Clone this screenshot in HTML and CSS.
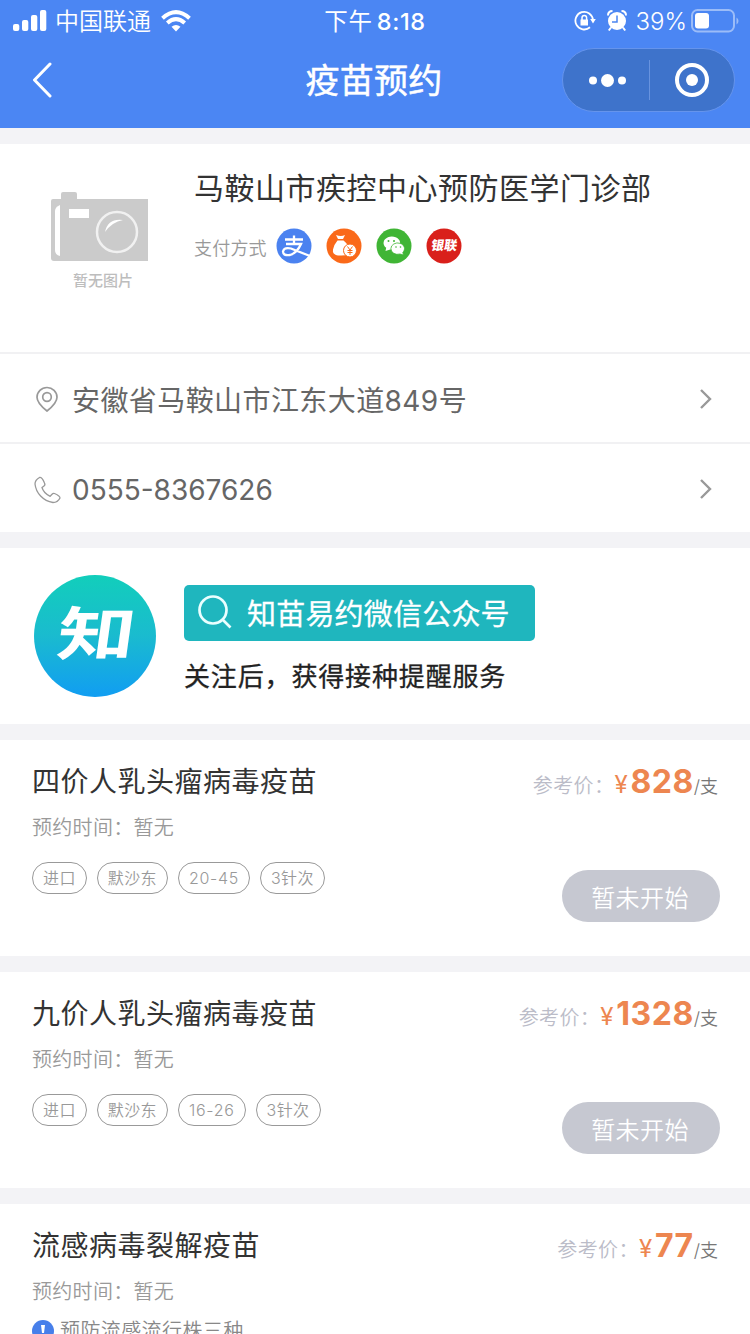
FILE: index.html
```html
<!DOCTYPE html>
<html lang="zh-CN">
<head>
<meta charset="utf-8">
<title>疫苗预约</title>
<link rel="stylesheet" href="styles.css">
</head>
<body>
<div class="screen">
  <header class="header">
    <div class="status">
      <div class="status-left">
        <svg class="signal" width="34" height="22" viewBox="0 0 34 22" fill="#fff"><rect x="0" y="14" width="6.3" height="7" rx="2"/><rect x="9" y="10" width="6.3" height="11" rx="2"/><rect x="18" y="5" width="6.3" height="16" rx="2"/><rect x="27" y="0" width="6.3" height="21" rx="2"/></svg>
        <span class="carrier">中国联通</span>
        <svg class="wifi" width="30" height="22" viewBox="0 0 30 22" fill="none" stroke="#fff" stroke-width="4"><path d="M1.500 8.200Q15-4 28.500 8.200"/><path d="M6.300 13Q15 5.300 23.700 13"/><path d="M15 21.500 10.500 16.800Q15 13.300 19.500 16.800Z" fill="#fff" stroke="none"/></svg>
      </div>
      <div class="clock">下午 <b>8:18</b></div>
      <div class="status-right">
        <svg width="22" height="22" viewBox="0 0 22 22"><path d="M16 17.300A8.800 8.800 0 1 1 19 10" fill="none" stroke="#fff" stroke-width="1.800"/><path d="M16.200 9h5.600L19 13.500zM6.500 9.500h7.500v6H6.500z" fill="#fff"/><path d="M8 10V7.700a2.300 2.300 0 0 1 4.600 0V10" fill="none" stroke="#fff" stroke-width="1.500"/></svg>
        <svg class="alarm" width="20" height="22" viewBox="0 0 20 22"><circle cx="10" cy="11" r="9" fill="#fff"/><path d="M1 5.500Q1 1 5.500 1M14.500 1Q19 1 19 5.500M4 17.500 1.800 20.500M16 17.500l2.200 3" fill="none" stroke="#fff" stroke-width="2"/><path d="M10 5.500V12H5" fill="none" stroke="#4b85f1" stroke-width="1.500"/></svg>
        <span class="percent">39%</span>
        <svg class="battery" width="48" height="24" viewBox="0 0 48 24"><rect x="1" y="1" width="42" height="21.500" rx="5.500" fill="none" stroke="#9bbcf8" stroke-width="2"/><rect x="4" y="4" width="14" height="15.500" rx="3" fill="#fff"/><path d="M45.500 8.500v7q2-1 2-3.500t-2-3.500" fill="#9bbcf8"/></svg>
      </div>
    </div>
    <div class="nav">
      <svg class="back" width="22" height="36" viewBox="0 0 22 36" fill="none" stroke="#fff" stroke-width="3" stroke-linecap="round" stroke-linejoin="round"><path d="M18 2 2.500 18 18 34"/></svg>
      <h1 class="nav-title">疫苗预约</h1>
      <div class="capsule">
        <svg class="capsule-icons" width="172" height="62" viewBox="0 0 172 62"><g fill="#fff"><circle cx="30" cy="31.500" r="4"/><circle cx="44.500" cy="31.500" r="6.500"/><circle cx="59" cy="31.500" r="4"/><circle cx="129" cy="31" r="6"/></g><path d="M86.500 11v40" stroke="#6893df" stroke-width="1"/><circle cx="129" cy="31" r="15" fill="none" stroke="#fff" stroke-width="4"/></svg>
      </div>
    </div>
  </header>

  <section class="card clinic">
    <div class="clinic-main">
      <div class="photo">
        <svg width="98" height="71" viewBox="0 0 98 71"><path d="M0 9q0-2 2-2h8V2q0-2 2-2h12q2 0 2 2v5h71v62H3q-3 0-3-3z" fill="#cbcbcb"/><path d="M4 19q0-4 5-6v51q-5-1-5-6z" fill="#fff"/><rect x="18" y="17" width="20" height="9" fill="#fff"/><circle cx="66" cy="40" r="20" fill="none" stroke="#f1f1f1" stroke-width="2.500"/><path d="M54 40Q57 26 72 28Q61 30 54 40" fill="#fff"/></svg>
        <span class="photo-text">暂无图片</span>
      </div>
      <div class="clinic-info">
        <h2 class="clinic-name">马鞍山市疾控中心预防医学门诊部</h2>
        <div class="payments">
          <span class="pay-label">支付方式</span>
          <svg class="pay" viewBox="0 0 36 36"><circle cx="18" cy="18" r="17.500" fill="#4b82f0"/><path d="M9 11.500h18M18 7.500v7.500M10 16h15Q21 25 14 27 7 28 7 23.500 8 19 15 20.500L34 28" fill="none" stroke="#fff" stroke-width="2.300"/></svg>
          <svg class="pay" viewBox="0 0 36 36"><circle cx="18" cy="18" r="17.500" fill="#fa6919"/><path d="M10 7q5 2 9 0l-2 4h-5zM11.500 12.500h6q6 5 6 10 0 5-8 5H12q-6-1-5-6 1-5 4.500-9" fill="#fff"/><circle cx="24" cy="22.500" r="6.500" fill="#fff" stroke="#fa6919" stroke-width="1"/><path d="m21.500 18.500 2.500 3.500 2.500-3.500M24 22v5M21.500 22.500h5M21.500 24.500h5" fill="none" stroke="#fa6919" stroke-width="1"/></svg>
          <svg class="pay" viewBox="0 0 36 36"><circle cx="18" cy="18" r="17.500" fill="#40b535"/><path d="m9.500 23 .7-3.200a8.300 6.500 0 1 1 4 1.600z" fill="#fff"/><path d="m27.500 27-3.500-1a6.800 5.700 0 1 1 2.800-1.600z" fill="#fff" stroke="#40b535" stroke-width=".8"/><g fill="#40b535"><circle cx="12.500" cy="13" r="1"/><circle cx="18" cy="13" r="1"/><circle cx="20" cy="19" r=".8"/><circle cx="24.500" cy="19" r=".8"/></g></svg>
          <svg class="pay" viewBox="0 0 36 36"><circle cx="18" cy="18" r="17.500" fill="#d9201b"/><text class="union" x="4.500" y="22.500" transform="translate(3.500 0) skewX(-9)">银联</text></svg>
        </div>
      </div>
    </div>
    <div class="contact">
      <svg class="contact-icon" width="28" height="28" viewBox="0 0 28 28" fill="none" stroke="#999" stroke-width="1.700"><path d="M13 25Q3 17 3 11.200A10 9.700 0 0 1 23 11.200Q23 17 13 25Z"/><circle cx="13" cy="11" r="4.300"/></svg>
      <span class="address">安徽省马鞍山市江东大道849号</span>
      <svg class="arrow" width="14" height="22" viewBox="0 0 14 22"><path d="m2 2 9 9-9 9"/></svg>
    </div>
    <div class="contact">
      <svg class="contact-icon" width="28" height="28" viewBox="0 0 28 28" fill="none" stroke="#999" stroke-width="1.300"><path d="M5.500 1.500Q1 4 1 8c1 9 8 17 18 18.500 3 0 5.500-1.500 7-4.500q0-2-5.500-4.500-1.500-.5-2.500.8l-1.800 2Q9.500 17 8 11.500l2-1.500q1.500-1 .5-3Q8 1 5.500 1.500Z"/></svg>
      <span class="phone">0555-8367626</span>
      <svg class="arrow" width="14" height="22" viewBox="0 0 14 22"><path d="m2 2 9 9-9 9"/></svg>
    </div>
  </section>

  <section class="card promo">
    <svg class="logo" width="122" height="122" viewBox="0 0 122 122"><defs><linearGradient id="sea" x1="0" y1="0" x2="0" y2="1"><stop offset="0" stop-color="#12cebb"/><stop offset=".5" stop-color="#1abbcf"/><stop offset="1" stop-color="#119df2"/></linearGradient></defs><circle cx="61" cy="61" r="61" fill="url(#sea)"/><text class="logo-text" transform="translate(21 80) skewX(-8) scale(1.34 1)">知</text></svg>
    <div class="promo-body">
      <div class="search">
        <svg width="34" height="34" viewBox="0 0 34 34" fill="none" stroke="#eaffff" stroke-width="2.700"><circle cx="15" cy="15" r="13.500"/><path d="m24.500 24.500 8 8"/></svg>
        <span>知苗易约微信公众号</span>
      </div>
      <p class="promo-note">关注后，获得接种提醒服务</p>
    </div>
  </section>

  <section class="card vaccine">
    <div class="vaccine-head"><h3>四价人乳头瘤病毒疫苗</h3><p class="price"><span class="ref">参考价：</span><span class="yen">¥</span><b>828</b><span class="unit">/支</span></p></div>
    <p class="time">预约时间：暂无</p>
    <div class="tags"><span class="tag">进口</span><span class="tag">默沙东</span><span class="tag num">20-45</span><span class="tag">3针次</span></div>
    <button class="action">暂未开始</button>
  </section>

  <section class="card vaccine">
    <div class="vaccine-head"><h3>九价人乳头瘤病毒疫苗</h3><p class="price"><span class="ref">参考价：</span><span class="yen">¥</span><b>1328</b><span class="unit">/支</span></p></div>
    <p class="time">预约时间：暂无</p>
    <div class="tags"><span class="tag">进口</span><span class="tag">默沙东</span><span class="tag num">16-26</span><span class="tag">3针次</span></div>
    <button class="action">暂未开始</button>
  </section>

  <section class="card vaccine">
    <div class="vaccine-head"><h3>流感病毒裂解疫苗</h3><p class="price"><span class="ref">参考价：</span><span class="yen">¥</span><b>77</b><span class="unit">/支</span></p></div>
    <p class="time">预约时间：暂无</p>
    <div class="notice"><svg width="22" height="22" viewBox="0 0 22 22"><circle cx="11" cy="11" r="11" fill="#477fea"/><path d="M9 5h4l-1 8h-2z" fill="#fff"/><circle cx="11" cy="16" r="1.500" fill="#fff"/></svg><span>预防流感流行株三种</span></div>
  </section>
</div>
</body>
</html>
```
FILE: styles.css
```css
* { box-sizing: border-box; }
body, h1, h2, h3, p { margin: 0; font-weight: inherit; }
body {
  background: #f3f3f6;
  color: #333;
  font-family: Inter, "Noto Sans CJK SC", sans-serif;
  font-weight: 350;
}
svg { display: block; flex: none; }
.screen {
  height: 1334px;
  overflow: hidden;
  display: flex;
  flex-direction: column;
  gap: 16px;
}
.header, .card { flex: none; }

.header { height: 128px; background: #4b86f3; color: #fff; }
.status {
  height: 40px;
  display: grid;
  grid-template-columns: 1fr auto 1fr;
  align-items: center;
  padding: 0 10px 0 13px;
  white-space: nowrap;
}
.status-left, .status-right { display: flex; align-items: center; }
.signal { margin-top: -1px; }
.carrier { font-size: 24px; line-height: 40px; margin-left: 8px; padding-top: 2px; }
.wifi { margin-left: 10px; }
.clock { font-size: 23.5px; line-height: 40px; font-weight: 400; letter-spacing: .6px; margin-left: -3px; padding-top: 1px; }
.clock b { font-weight: 550; margin-left: -3px; }
.status-right { justify-content: flex-end; }
.alarm { margin-left: 11px; }
.percent { font-size: 24px; line-height: 40px; margin: 2px 4px 0 9px; }
.battery { margin-right: 1px; }
.nav {
  height: 80px;
  display: grid;
  grid-template-columns: 1fr auto 1fr;
  align-items: center;
  padding: 0 15px 0 32px;
}
.nav-title {
  font-size: 34px;
  line-height: 48px;
  font-weight: 400;
  -webkit-text-stroke: .5px;
  letter-spacing: .3px;
  margin-left: -19px;
  padding-top: 2px;
}
.capsule {
  justify-self: end;
  width: 173px;
  height: 64px;
  border: 1px solid #6594ec;
  border-radius: 32px;
  background: #3e73cb;
}

.card { background: #fff; }
.clinic { height: 388px; }
.clinic-main { height: 208px; display: flex; }
.photo {
  width: 98px;
  margin: 48px 45px 0 51px;
  display: flex;
  flex-direction: column;
  align-items: center;
}
.photo-text { font-size: 15px; line-height: 22px; font-weight: 500; color: #bdbdbd; margin: 7px 0 0 6px; white-space: nowrap; }
.clinic-info { padding-top: 23px; }
.clinic-name { font-size: 30px; line-height: 42px; font-weight: 400; letter-spacing: .5px; white-space: nowrap; }
.payments { display: flex; align-items: center; margin-top: 19px; }
.pay-label { font-size: 18px; line-height: 36px; letter-spacing: .2px; color: #999; width: 82px; padding-top: 3px; }
.pay { width: 36px; height: 36px; margin: -3px 14px 0 0; }
.union { font-size: 13px; font-weight: 900; fill: #fff; }
.contact {
  height: 90px;
  border-top: 2px solid #f1f1f3;
  padding: 3px 37px 0 34px;
  display: flex;
  align-items: center;
  font-size: 28px;
  font-weight: 400;
  letter-spacing: .5px;
  color: #666;
}
.contact-icon { margin-right: 10px; }
.address { letter-spacing: .42px; margin-top: -2px; }
.phone { letter-spacing: 0; padding-top: 1px; }
.arrow { margin: -2px 0 0 auto; fill: none; stroke: #999; stroke-width: 2.4; }

.promo { height: 176px; display: flex; padding: 27px 34px; gap: 28px; }
.logo-text { font-size: 58px; font-weight: 700; fill: #fff; }
.promo-body { padding-top: 10px; }
.search {
  width: 351px;
  height: 56px;
  border-radius: 5px;
  background: #1fb6be;
  display: flex;
  align-items: center;
  gap: 15px;
  padding: 0 0 2px 14px;
  color: #fff;
  font-size: 29px;
  font-weight: 400;
  -webkit-text-stroke: .3px;
  letter-spacing: .2px;
  white-space: nowrap;
}
.promo-note {
  margin-top: 16px;
  font-size: 26px;
  line-height: 40px;
  font-weight: 400;
  -webkit-text-stroke: .3px;
  letter-spacing: .85px;
  color: #222;
}

.vaccine { height: 216px; padding: 21px 32px 0; display: flex; flex-direction: column; }
.vaccine-head { display: flex; justify-content: space-between; height: 42px; }
.vaccine h3 { font-size: 28px; line-height: 42px; font-weight: 400; letter-spacing: .5px; }
.price { display: flex; align-items: baseline; line-height: 42px; color: #ed8650; font-size: 24px; }
.ref { font-size: 20px; letter-spacing: .4px; color: #bbbcc8; }
.yen { width: 16px; font-weight: 400; }
.price b { font-size: 32px; font-weight: 700; letter-spacing: .5px; }
.unit { font-size: 18px; color: #777; }
.time { font-size: 20px; line-height: 30px; letter-spacing: .3px; color: #999; margin-top: 10px; }
.tags { display: flex; gap: 10px; margin-top: 19px; }
.tag {
  height: 32px;
  padding: 0 10px;
  border: 1px solid #999;
  border-radius: 16px;
  font-size: 16px;
  line-height: 30px;
  letter-spacing: .4px;
  color: #999;
}
.num { letter-spacing: .7px; }
.action {
  align-self: flex-end;
  width: 158px;
  height: 52px;
  margin: -24px -2px 0 0;
  padding: 0 2px 0 0;
  border: 0;
  border-radius: 26px;
  background: #c6c8d1;
  color: #fff;
  font: inherit;
  font-size: 24px;
  letter-spacing: .4px;
}
.notice { display: flex; align-items: center; gap: 6px; margin-top: 9px; font-size: 20px; line-height: 30px; letter-spacing: .4px; color: #888; }
```
